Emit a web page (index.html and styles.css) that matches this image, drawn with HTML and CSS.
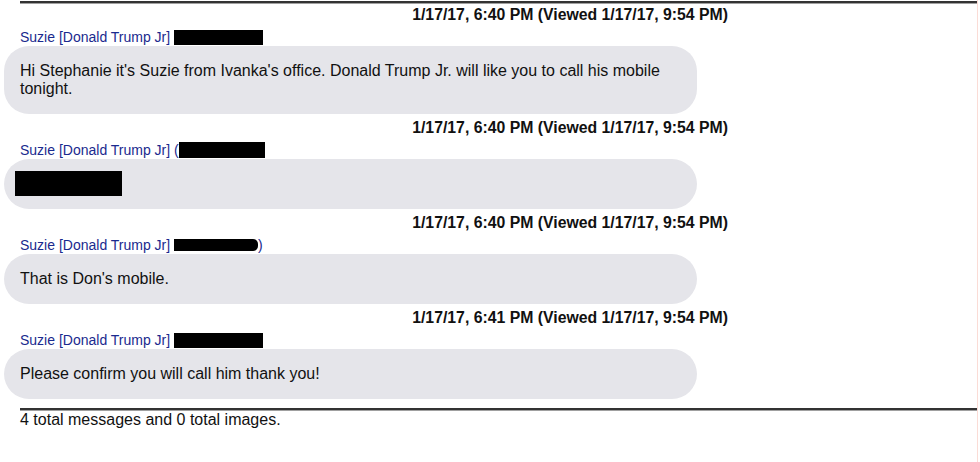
FILE: index.html
```html
<!DOCTYPE html>
<html>
<head>
<meta charset="utf-8">
<link rel="stylesheet" href="styles.css">
</head>
<body>
<div class="page">
  <div class="rule rule-top"></div>
  <div class="msg">
    <div class="ts">1/17/17, 6:40 PM (Viewed 1/17/17, 9:54 PM)</div>
    <div class="sender">Suzie [Donald Trump Jr] <span class="redact"></span></div>
    <div class="bubble">Hi Stephanie it's Suzie from Ivanka's office. Donald Trump Jr. will like you to call his mobile tonight.</div>
  </div>
  <div class="msg">
    <div class="ts">1/17/17, 6:40 PM (Viewed 1/17/17, 9:54 PM)</div>
    <div class="sender">Suzie [Donald Trump Jr] (<span class="redact redact-b"></span></div>
    <div class="bubble"><span class="redact redact-body"></span></div>
  </div>
  <div class="msg">
    <div class="ts">1/17/17, 6:40 PM (Viewed 1/17/17, 9:54 PM)</div>
    <div class="sender">Suzie [Donald Trump Jr] <span class="redact redact-c"></span>)</div>
    <div class="bubble">That is Don's mobile.</div>
  </div>
  <div class="msg">
    <div class="ts">1/17/17, 6:41 PM (Viewed 1/17/17, 9:54 PM)</div>
    <div class="sender">Suzie [Donald Trump Jr] <span class="redact"></span></div>
    <div class="bubble">Please confirm you will call him thank you!</div>
  </div>
  <div class="rule rule-bottom"></div>
  <div class="footer">4 total messages and 0 total images.</div>
</div>
</body>
</html>
```

FILE: styles.css
```css
html, body {
  margin: 0;
  padding: 0;
  background: #ffffff;
}

.page {
  width: 978px;
  min-height: 462px;
  border-right: 1px solid #fbdcd6;
  font-family: "Liberation Sans", Arial, sans-serif;
  color: #111111;
  padding-top: 1px;
  box-sizing: border-box;
}

.rule {
  margin-left: 20px;
  height: 2px;
  background: #333333;
  border-bottom: 1px solid #a0a0a0;
}

.rule-top {
  margin-bottom: 1px;
}

.msg {
  width: 728px;
  display: flex;
  flex-direction: column;
  padding-bottom: 4px;
}

.ts {
  text-align: right;
  font-weight: bold;
  font-size: 15.8px;
  line-height: 20px;
  margin-bottom: 3px;
}

.sender {
  padding-left: 20px;
  font-size: 14px;
  line-height: 18px;
  color: #1a2a8e;
  display: flex;
  align-items: center;
  white-space: pre;
}

.redact {
  display: inline-block;
  width: 89px;
  height: 15px;
  background: #000000;
}

.redact-b {
  width: 86px;
  height: 16px;
}

.redact-c {
  width: 84px;
  height: 12px;
  border-radius: 0 5px 5px 0;
}

.redact-body {
  width: 107px;
  height: 25px;
  margin-top: -4px;
  margin-bottom: -3px;
  margin-left: -5px;
  vertical-align: top;
}

.bubble {
  margin-left: 4px;
  width: 693px;
  box-sizing: border-box;
  padding: 16px 16px 16px 16px;
  background: #e5e5ea;
  border-radius: 25px;
  font-size: 16px;
  line-height: 18px;
  color: #111111;
}

.rule-bottom {
  margin-top: 5px;
}

.footer {
  padding-left: 20px;
  font-size: 16px;
  line-height: 18px;
  color: #111111;
}
```
